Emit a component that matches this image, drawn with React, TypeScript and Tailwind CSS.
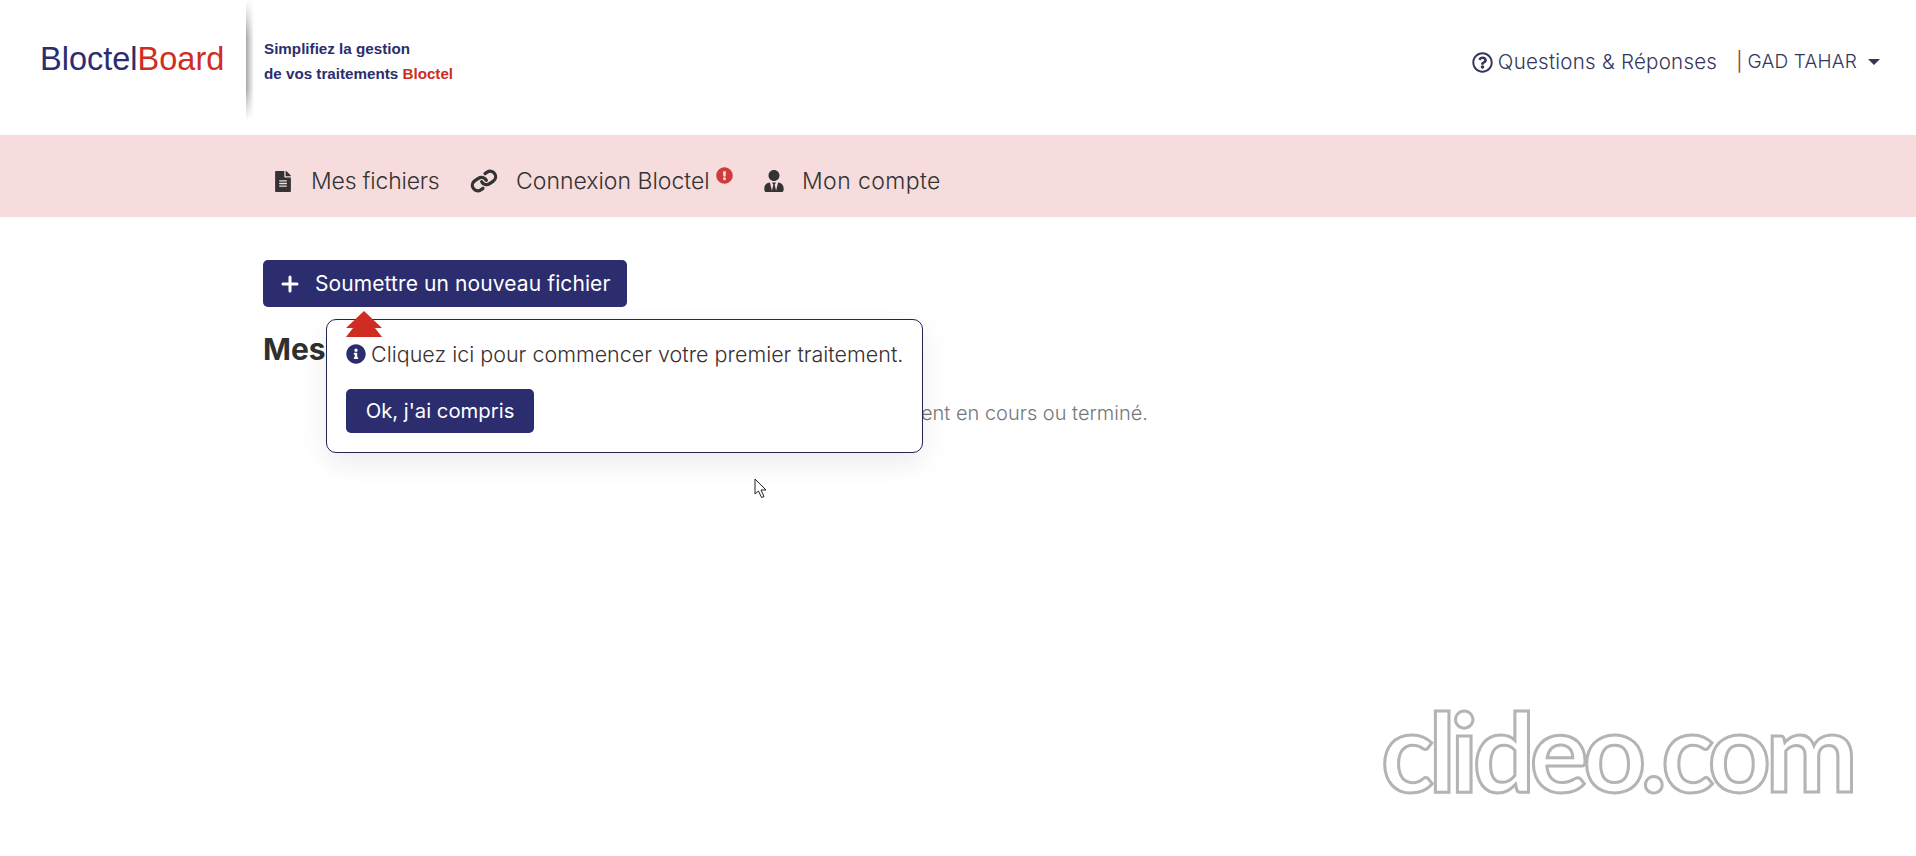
import { FaFileAlt, FaInfoCircle, FaExclamationCircle, FaRegQuestionCircle, FaUserTie } from "react-icons/fa";
import { FiPlus } from "react-icons/fi";
import { LuLink } from "react-icons/lu";

const NavItem = ({ icon, label, className }: { icon: React.ReactNode; label: string; className: string }) => (
  <div className={`flex items-center ${className}`}>
    {icon}
    <span>{label}</span>
  </div>
);

const App = () => {
  return (
    <div className="relative w-[1916px] h-[856px] overflow-hidden bg-white font-['Inter',sans-serif] font-light text-[#2f2f35]">
      {/* header */}
      <header className="h-[135px] flex items-center justify-between">
        <div className="flex items-center h-full">
          <div className="pl-[40px] w-[246px] pb-[17px] font-['Liberation_Sans',sans-serif] font-normal text-[32.5px]">
            <span className="text-[#2b2d6e]">Bloctel</span>
            <span className="text-[#d02c22]">Board</span>
          </div>
          <div className="self-start w-[8px] h-[120px] bg-gradient-to-r from-[#a8a8a8] to-transparent [mask-image:linear-gradient(to_bottom,transparent,black_30%,black_75%,transparent)]" />
          <div className="pl-[10px] pb-[13px] font-['Liberation_Sans',sans-serif] font-bold text-[15.2px] leading-[25px] text-[#2b2d6e]">
            <div>Simplifiez la gestion</div>
            <div>
              de vos traitements <span className="text-[#d02c22]">Bloctel</span>
            </div>
          </div>
        </div>
        <div className="flex items-center pr-[36px] pb-[11px] text-[19px] text-[#33365a]">
          <FaRegQuestionCircle className="w-[21px] h-[21px] mr-[5px]" />
          <span className="text-[20.5px] tracking-[0.25px]">Questions &amp; Réponses</span>
          <span className="ml-[19px] font-normal text-[#a83d3d]">|</span>
          <span className="ml-[5px] tracking-[0.2px]">GAD TAHAR</span>
          <span className="ml-[11px] w-0 h-0 border-x-[6px] border-x-transparent border-t-[6px] border-t-[#33365a]" />
        </div>
      </header>

      {/* nav */}
      <nav className="h-[82px] bg-[#f6dcdc] flex items-center pl-[274px] pt-[10px] text-[23px] text-[#333]">
        <NavItem
          className="w-[197px] tracking-[-0.2px]"
          icon={<FaFileAlt className="w-[18px] h-[21px] mr-[19px]" />}
          label="Mes fichiers"
        />
        <div className="flex items-center w-[293px]">
          <LuLink className="w-[26px] h-[26px] mr-[19px] rotate-[10deg]" strokeWidth={3} />
          <span>Connexion Bloctel</span>
          <FaExclamationCircle className="w-[17px] h-[17px] ml-[6px] mb-[12px] text-[#cf3b3b]" />
        </div>
        <NavItem
          className="tracking-[0.4px]"
          icon={<FaUserTie className="w-[20px] h-[22px] mr-[18px]" />}
          label="Mon compte"
        />
      </nav>

      {/* content */}
      <main className="pl-[263px] pt-[43px]">
        <button className="flex items-center w-[364px] h-[47px] pl-[15px] rounded-[5px] bg-[#2b2d6e] text-white text-[21px] tracking-[0.1px] font-normal">
          <FiPlus className="w-[24px] h-[24px] mr-[13px]" strokeWidth={3} />
          Soumettre un nouveau fichier
        </button>
        <h2 className="mt-[22px] text-[30px] font-bold text-[#2f2f2f] leading-[40px]">Mes fichiers</h2>
        <p className="mt-[29px] w-[885px] text-right text-[20px] text-[#77777a]">Vous n'avez aucun traitement en cours ou terminé.</p>
      </main>

      {/* popover */}
      <div className="absolute left-[326px] top-[319px] w-[597px] h-[134px] rounded-[10px] border border-[#23244f] bg-white pl-[19px] pt-[18px] shadow-[0_10px_28px_rgba(0,0,0,0.08)]">
        <div className="flex items-center text-[21.5px] text-[#3a2f2f]">
          <FaInfoCircle className="w-[20px] h-[20px] mr-[5px] text-[#2b2d6e]" />
          Cliquez ici pour commencer votre premier traitement.
        </div>
        <button className="mt-[19px] w-[188px] h-[44px] rounded-[5px] bg-[#2b2d6e] text-white text-[20.3px] font-normal">
          Ok, j'ai compris
        </button>
      </div>

      {/* arrow */}
      <svg className="absolute left-[346px] top-[311px]" width="36" height="26" viewBox="0 0 36 26">
        <path d="M18 0 L36 17 L29 17 L36 26 L0 26 L7 17 L0 17 Z" fill="#cf2c22" />
      </svg>

      {/* cursor */}
      <svg className="absolute left-[754px] top-[478px]" width="14" height="21" viewBox="0 0 14 21">
        <path d="M1 1 L1 16 L4.5 13 L7.5 19.5 L10 18.5 L7 12 L12 12 Z" fill="#fff" stroke="#222" strokeWidth="1" />
      </svg>

      {/* watermark */}
      <div className="absolute left-[1381px] top-[684px] font-['Lato',sans-serif] font-bold text-[110px] leading-[130px] tracking-[-5.5px] text-transparent [-webkit-text-stroke:3px_#b4b4b4]">
        clideo.com
      </div>
    </div>
  );
};

export default App;
